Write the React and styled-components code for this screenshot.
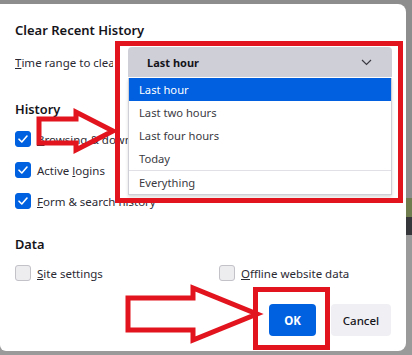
import React from "react";
import styled, { createGlobalStyle } from "styled-components";

const GlobalStyle = createGlobalStyle`
  html, body {
    margin: 0;
    padding: 0;
  }
  body {
    background: linear-gradient(
      to bottom,
      #8d8d8d 0px,
      #8d8d8d 198px,
      #6f7d4e 198px,
      #6f7d4e 217px,
      #35363a 217px,
      #35363a 235px,
      #9a9a9a 235px
    );
    font-family: "Noto Sans", "Open Sans", sans-serif;
    color: #15141a;
  }
`;

const Screen = styled.div`
  position: relative;
  width: 412px;
  height: 355px;
  overflow: hidden;
`;

const Dialog = styled.div`
  position: relative;
  margin-top: 4px;
  width: 406px;
  height: 347px;
  background: #fff;
  border-radius: 0 8px 8px 6px;
  box-sizing: border-box;
  padding: 14px 14px 0 15px;
  display: flex;
  flex-direction: column;
`;

const Title = styled.div`
  height: 24px;
  line-height: 24px;
  font-size: 13px;
  font-weight: 600;
`;

const RangeRow = styled.div`
  margin-top: 5px;
  display: flex;
  align-items: center;
  height: 30px;
`;

const RangeLabel = styled.div`
  width: 98px;
  overflow: hidden;
  white-space: nowrap;
  font-size: 11.5px;
  color: #2b2a33;
`;

const Select = styled.div`
  margin-left: 15px;
  flex: 1;
  height: 30px;
  background: #cfcfd8;
  border-radius: 4px 4px 0 0;
  display: flex;
  align-items: center;
  justify-content: space-between;
  padding: 0 20px 0 19px;
  box-sizing: border-box;
  font-size: 11px;
  font-weight: 700;
`;

const SectionHead = styled.div`
  margin-top: ${(p) => p.$top}px;
  height: 24px;
  line-height: 24px;
  font-size: 12.8px;
  font-weight: 600;
`;

const CheckList = styled.div`
  margin-top: 3px;
  display: flex;
  flex-direction: column;
  gap: 1px;
`;

const DataGrid = styled.div`
  margin-top: 2px;
  display: grid;
  grid-template-columns: 204px 1fr;
`;

const CheckRow = styled.label`
  height: 30px;
  display: flex;
  align-items: center;
  gap: 6px;
  font-size: 11.5px;
  color: #2b2a33;
  white-space: nowrap;
`;

const Box = styled.span`
  width: 16px;
  height: 16px;
  box-sizing: border-box;
  border-radius: 3px;
  display: flex;
  align-items: center;
  justify-content: center;
  background: ${(p) => (p.$checked ? "#0061e0" : "#ededf0")};
  border: 1px solid ${(p) => (p.$checked ? "#0061e0" : "#c2c2c8")};
`;

const Buttons = styled.div`
  margin-top: 16px;
  display: flex;
  justify-content: flex-end;
  gap: 15px;
  padding-right: 1px;
`;

const Button = styled.div`
  height: 32px;
  width: ${(p) => p.$width}px;
  border-radius: 4px;
  display: flex;
  align-items: center;
  justify-content: center;
  font-size: 11.5px;
  font-weight: ${(p) => (p.$primary ? 700 : 500)};
  background: ${(p) => (p.$primary ? "#0061e0" : "#f0f0f4")};
  color: ${(p) => (p.$primary ? "#fff" : "#15141a")};
`;

const Popup = styled.div`
  position: absolute;
  left: 128px;
  top: 78px;
  width: 264px;
  box-sizing: border-box;
  background: #fff;
  border: 1px solid #cfcfd8;
  border-top: none;
  box-shadow: 0 2px 3px rgba(0, 0, 0, 0.15);
  display: flex;
  flex-direction: column;
`;

const Option = styled.div`
  height: 23px;
  display: flex;
  align-items: center;
  padding-left: 10px;
  font-size: 11.2px;
  color: ${(p) => (p.$active ? "#fff" : "#3b3a42")};
  background: ${(p) => (p.$active ? "#0060df" : "transparent")};
`;

const Separator = styled.div`
  height: 1px;
  background: #e0e0e6;
`;

const RedBox = styled.div`
  position: absolute;
  left: ${(p) => p.$x}px;
  top: ${(p) => p.$y}px;
  width: ${(p) => p.$w}px;
  height: ${(p) => p.$h}px;
  box-sizing: border-box;
  border: 5px solid #e2141e;
  pointer-events: none;
`;

const ArrowLayer = styled.svg`
  position: absolute;
  left: 0;
  top: 0;
  pointer-events: none;
`;

function Check() {
  return (
    <svg width="12" height="12" viewBox="0 0 12 12">
      <path
        d="M2 6.2 L4.8 9 L10 3"
        fill="none"
        stroke="#fff"
        strokeWidth="1.6"
        strokeLinecap="round"
        strokeLinejoin="round"
      />
    </svg>
  );
}

function CheckItem({ checked, children }) {
  return (
    <CheckRow>
      <Box $checked={checked}>{checked && <Check />}</Box>
      <span>{children}</span>
    </CheckRow>
  );
}

const OPTIONS = ["Last hour", "Last two hours", "Last four hours", "Today"];

export default function App() {
  return (
    <Screen>
      <GlobalStyle />
      <Dialog>
        <Title>Clear Recent History</Title>
        <RangeRow>
          <RangeLabel>
            <u>T</u>ime range to clear:
          </RangeLabel>
          <Select>
            <span>Last hour</span>
            <svg width="11" height="7" viewBox="0 0 11 7">
              <path
                d="M1 1 L5.5 5.5 L10 1"
                fill="none"
                stroke="#3b3a42"
                strokeWidth="1.2"
              />
            </svg>
          </Select>
        </RangeRow>

        <SectionHead $top={20}>History</SectionHead>
        <CheckList>
          <CheckItem checked>
            <u>B</u>rowsing &amp; download history
          </CheckItem>
          <CheckItem checked>
            Active <u>l</u>ogins
          </CheckItem>
          <CheckItem checked>
            <u>F</u>orm &amp; search history
          </CheckItem>
        </CheckList>

        <SectionHead $top={16}>Data</SectionHead>
        <DataGrid>
          <CheckItem>
            <u>S</u>ite settings
          </CheckItem>
          <CheckItem>
            <u>O</u>ffline website data
          </CheckItem>
        </DataGrid>

        <Buttons>
          <Button $primary $width={47}>
            OK
          </Button>
          <Button $width={60}>Cancel</Button>
        </Buttons>
      </Dialog>

      <Popup>
        {OPTIONS.map((o, i) => (
          <Option key={o} $active={i === 0}>
            {o}
          </Option>
        ))}
        <Separator />
        <Option>Everything</Option>
      </Popup>

      <RedBox $x={115} $y={41} $w={288} $h={162} />
      <RedBox $x={253} $y={287} $w={77} $h={63} />

      <ArrowLayer width="412" height="355" viewBox="0 0 412 355">
        <polygon
          points="39,119 76,119 76,112 113,131 76,150 76,143 39,143"
          fill="none"
          stroke="#e2141e"
          strokeWidth="5"
          strokeLinejoin="miter"
        />
        <polygon
          points="128,298 193,298 193,288 257,314 193,340 193,330 128,330"
          fill="none"
          stroke="#e2141e"
          strokeWidth="5"
          strokeLinejoin="miter"
        />
      </ArrowLayer>
    </Screen>
  );
}
